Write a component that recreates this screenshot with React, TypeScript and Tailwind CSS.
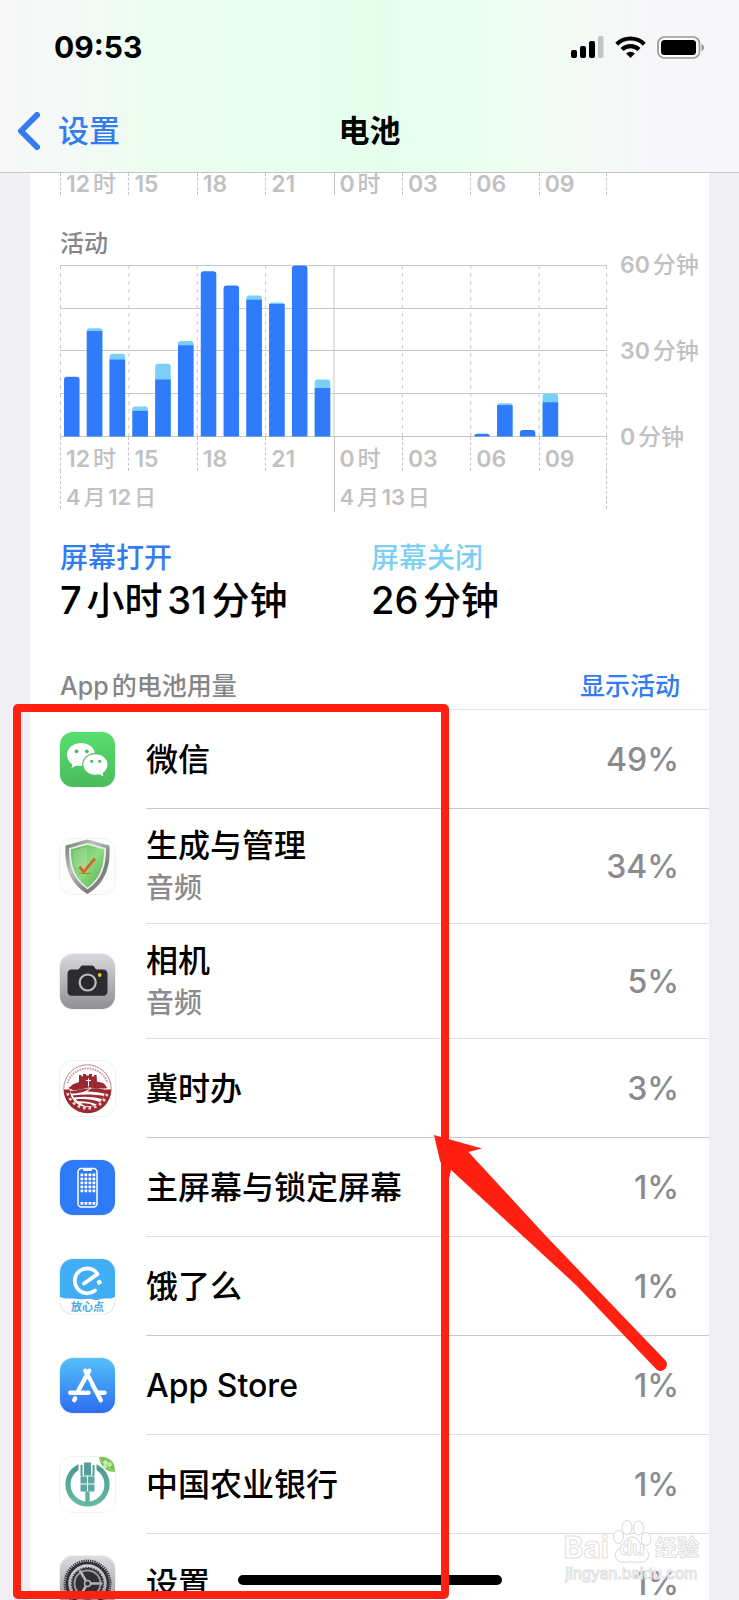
import React from 'react';

interface HourUsage {
    hour: number;
    on: number;
    off: number;
}

interface AppUsage {
    name: string;
    note?: string;
    percent: number;
    icon: React.ReactNode;
    strong?: boolean;
}

// minutes of screen time per hour slot, counted from 12:00
const HOURS: HourUsage[] = [
    { hour: 0, on: 21, off: 0 },
    { hour: 1, on: 37, off: 1 },
    { hour: 2, on: 27, off: 2 },
    { hour: 3, on: 9, off: 1.5 },
    { hour: 4, on: 20, off: 5.5 },
    { hour: 5, on: 32, off: 1.5 },
    { hour: 6, on: 58, off: 0 },
    { hour: 7, on: 53, off: 0 },
    { hour: 8, on: 48, off: 1.5 },
    { hour: 9, on: 46.5, off: 0.5 },
    { hour: 10, on: 60, off: 0 },
    { hour: 11, on: 17, off: 3 },
    { hour: 18, on: 1, off: 0 },
    { hour: 19, on: 11, off: 0.7 },
    { hour: 20, on: 2.3, off: 0 },
    { hour: 21, on: 12, off: 3 },
];

const TICKS = ['12时', '15', '18', '21', '0时', '03', '06', '09'];

const SignalIcon = () => (
    <svg width="33" height="22" viewBox="0 0 33 22">
        <rect x="0" y="14" width="6" height="8" rx="2" />
        <rect x="9" y="10" width="6" height="12" rx="2" />
        <rect x="18" y="5" width="6" height="17" rx="2" />
        <rect x="27" y="0" width="5.5" height="22" rx="2" fill="#c3c7c4" />
    </svg>
);

const WifiIcon = () => (
    <svg width="31" height="22" viewBox="0 0 30 22" fill="none" stroke="#000" strokeWidth="4.2">
        <path d="M1.2 8.2a19.6 19.6 0 0 1 27.600 0" />
        <path d="M6.500 13.600a12.200 12.200 0 0 1 17 0" />
        <path d="M15 22l-4.400-4.400a6.200 6.200 0 0 1 8.800 0z" fill="#000" stroke="none" />
    </svg>
);

const BatteryIcon = () => (
    <svg width="48" height="23" viewBox="0 0 48 23">
        <rect x="1" y="1" width="41.5" height="21" rx="6.5" fill="#fff" fillOpacity="0.5" stroke="#98999b" strokeWidth="1.7" />
        <rect x="4" y="4" width="35" height="15" rx="3.5" />
        <path d="M44.5 8c3.5 1.4 3.5 5.8 0 7.200z" fill="#98999b" />
    </svg>
);

const WeChatIcon = () => (
    <svg className="size-full" viewBox="0 0 55 55">
        <defs>
            <linearGradient id="wechat" x1="0" y1="0" x2="0" y2="1">
                <stop offset="0" stopColor="#58de70" />
                <stop offset="1" stopColor="#4abb5b" />
            </linearGradient>
        </defs>
        <rect width="55" height="55" fill="url(#wechat)" />
        <path d="M21 11c-8 0-14 5.200-14 12 0 3.800 2 7 5.300 9.200L11.500 36l5-2.600c1.500.4 3 .6 4.500.6 8 0 14-5 14-11.500S29 11 21 11z" fill="#fff" />
        <ellipse cx="35.500" cy="32.500" rx="13.300" ry="11.500" fill="#4fc763" />
        <path d="M35.500 22.300c-6.700 0-12.100 4.500-12.100 10.300s5.400 10.200 12.100 10.200c1.400 0 2.700-.2 4-.5l4 2.100-.9-3.500c3-2 4.900-4.900 4.900-8.300 0-5.800-5.300-10.300-12-10.300z" fill="#fff" />
        <circle cx="16.500" cy="19.300" r="1.900" fill="#4cbd5f" />
        <circle cx="26.800" cy="19.300" r="1.900" fill="#4cbd5f" />
        <circle cx="31.700" cy="29.300" r="1.600" fill="#4cbd5f" />
        <circle cx="39.700" cy="29.300" r="1.600" fill="#4cbd5f" />
    </svg>
);

const ShieldIcon = () => (
    <svg className="size-full" viewBox="0 0 55 55">
        <defs>
            <linearGradient id="metal" x1="0" y1="0" x2="1" y2="1">
                <stop offset="0" stopColor="#6f7470" />
                <stop offset="0.350" stopColor="#bfc2c0" />
                <stop offset="0.700" stopColor="#777b79" />
                <stop offset="1" stopColor="#a6aaa7" />
            </linearGradient>
            <linearGradient id="glass" x1="0" y1="0" x2="1" y2="1">
                <stop offset="0" stopColor="#5dba4f" />
                <stop offset="0.500" stopColor="#8fdb83" />
                <stop offset="1" stopColor="#55ac49" />
            </linearGradient>
        </defs>
        <rect width="55" height="55" fill="#fdfdfd" />
        <path d="M27.500 0.500C21 1.500 14 5 5.500 6.500c-1 20 3 37 22 48.500 19-11.500 23-28.500 22-48.500C41 5 34 1.500 27.500.5z" fill="url(#metal)" />
        <path d="M27.500 4C22 5 16 7.500 9 9c-.4 18 4 31.500 18.500 41.500C42 40.500 46.400 27 46 9 39 7.500 33 5 27.500 4z" fill="#e6ebe5" />
        <path d="M27.500 6C22 7 17 9 11 10.300c-.2 17 4 29.200 16.500 38.200C40 39.500 44.200 27.300 44 10.300 38 9 33 7 27.500 6z" fill="url(#glass)" />
        <path d="M13 12c4-1 9-3 14-4v22c-5 0-10-1-13-3-1-5-1-10-1-15z" fill="#fff" fillOpacity="0.180" />
        <path d="M19.500 27.500l4 5.500L35 19.500" fill="none" stroke="#d9652c" strokeWidth="2.800" />
        <path d="M19 35c3-2 6 1 12-1" fill="none" stroke="#a77b42" strokeWidth="1" />
    </svg>
);

const CameraIcon = () => (
    <svg className="size-full" viewBox="0 0 55 55">
        <defs>
            <linearGradient id="camera" x1="0" y1="0" x2="0" y2="1">
                <stop offset="0" stopColor="#d9d9dd" />
                <stop offset="1" stopColor="#8f8f94" />
            </linearGradient>
        </defs>
        <rect width="55" height="55" fill="url(#camera)" />
        <path d="M11.500 15.500H18c1.500 0 2.200-4 4.700-4H32c2.500 0 3.200 4 4.700 4h6.800c2.300 0 4 1.700 4 4v18.300c0 2.300-1.700 4-4 4h-32c-2.300 0-4-1.700-4-4V19.500c0-2.300 1.700-4 4-4z" fill="#2b2b30" />
        <circle cx="27.700" cy="28.500" r="8" fill="#27272c" stroke="#bdbdc2" strokeWidth="2.200" />
        <circle cx="39.700" cy="21" r="1.900" fill="#e8c530" />
    </svg>
);

const JishibanIcon = () => (
    <svg className="size-full" viewBox="0 0 55 55">
        <rect width="55" height="55" fill="#fff" />
        <circle cx="27.500" cy="27.500" r="23.700" fill="#fff" stroke="#b9777c" strokeWidth="0.900" />
        <path d="M7.500 22a21 21 0 0 1 40 0" fill="none" stroke="#cf9a9d" strokeWidth="2" strokeDasharray="1.600 1" />
        <path d="M3.800 28.500a23.700 23.700 0 0 0 47.400 0h-6a17.700 17.700 0 0 1-35.400 0z" fill="#9b2931" />
        <path d="M7.500 32a20.700 20.700 0 0 0 40 0" fill="none" stroke="#eed6d7" strokeWidth="2.600" strokeDasharray="2.600 3" />
        <path d="M8 27c3-1 4-4 7-4.500l4-1.500v-7h2.500v1.500H23V13h3v1.500h3V13h3v2.500h2V14h2.500l.5 6.500 6 1.500c2 1 3 3 4 5-3 1.500-6-.5-9 .5l-9-1-9 2-6 1z" fill="#9b2931" />
        <path d="M28.500 17.500v8M26 19.500h5" stroke="#fff" strokeWidth="1" />
        <path d="M10 29.500c7 1 12-2.500 20-2-4 3-11 5-19 5z" fill="#9b2931" />
        <path d="M31 27.500c5-.5 10 0 14.500 1.500l-.5 3.500c-5-.5-11-2-18-2z" fill="#9b2931" />
        <path d="M12.500 34.500c10-1.500 21-1.500 31.500.5L42 38c-9-2.500-18-3-28-1.500z" fill="#9b2931" />
        <path d="M15.500 38.500c9-1 17 0 24.500 2.500L37 43.500c-6-2.500-12-3.500-19-3.300z" fill="#9b2931" />
        <path d="M21 42.500c5-.5 9 .5 12.500 2-4 1.500-9 1-12.500-2z" fill="#9b2931" />
    </svg>
);

const HomeScreenIcon = () => (
    <svg className="size-full" viewBox="0 0 55 55">
        <rect width="55" height="55" fill="#2f7af8" />
        <rect x="18" y="8.500" width="19" height="38.500" rx="3.500" fill="none" stroke="#fff" strokeWidth="1.500" />
        <path d="M23 8.500h9v1.300c0 .8-.7 1.200-1.500 1.200h-6c-.8 0-1.500-.4-1.500-1.200z" fill="#fff" />
        {[14, 18, 22, 26, 30, 42.5].map((y) =>
            [21, 25, 29, 33].map((x) => <rect key={`${x}-${y}`} x={x - 0.5} y={y - 0.6} width="2.800" height="2.800" rx="0.500" fill="#fff" />)
        )}
    </svg>
);

const ElemeIcon = () => (
    <svg className="size-full" viewBox="0 0 55 55">
        <rect width="55" height="55" fill="#41adf5" />
        <path d="M0 38c6 2.500 12 1 18 2 5 1 9-1 14 0 4 2.500 7 0 11-.500 4-.500 7 1 12-1.500v17H0z" fill="#fff" />
        <path d="M35 31.500a12.400 12.400 0 1 1 2.500-16.400L24 24.500" fill="none" stroke="#fff" strokeWidth="3.800" strokeLinejoin="round" strokeLinecap="round" />
        <rect x="37" y="21" width="4.500" height="4.500" rx="1" fill="#fff" transform="rotate(-30 39.200 23.200)" />
        <text x="27.500" y="52" textAnchor="middle" fontSize="11" fontWeight="700" fill="#4ba9dc">放心点</text>
    </svg>
);

const AppStoreIcon = () => (
    <svg className="size-full" viewBox="0 0 55 55">
        <defs>
            <linearGradient id="store" x1="0" y1="0" x2="0" y2="1">
                <stop offset="0" stopColor="#54c0f9" />
                <stop offset="1" stopColor="#2e6df1" />
            </linearGradient>
        </defs>
        <rect width="55" height="55" fill="url(#store)" />
        <g fill="none" stroke="#fff" strokeWidth="4.400" strokeLinecap="round">
            <path d="M29.300 12.700L18.600 32" />
            <path d="M25.300 12.700l15.500 29.600" />
            <path d="M10.300 34.800h18.200" />
            <path d="M38 34.800h6.500" />
            <path d="M15.200 40.300l-1 1.800" />
        </g>
        <path d="M27.300 21.500l2.600 4.900-4.200 7" fill="none" stroke="#3f98f5" strokeWidth="1" />
    </svg>
);

const AgriBankIcon = () => (
    <svg className="size-full" viewBox="0 0 55 55">
        <defs>
            <linearGradient id="bank" x1="0" y1="0" x2="0" y2="1">
                <stop offset="0" stopColor="#4e9692" />
                <stop offset="1" stopColor="#66b9a3" />
            </linearGradient>
        </defs>
        <rect width="55" height="55" fill="#fff" />
        <circle cx="27.500" cy="27.500" r="19.500" fill="none" stroke="url(#bank)" strokeWidth="5.200" />
        <path d="M18.500 4h18v15h-18z" fill="#fff" />
        <path d="M20.500 8v11.500h14V8h-2v10.500h-10V8z" fill="#559f98" />
        <path d="M24 5.500h7v12.500h-7z" fill="#559f98" />
        <path d="M20.500 20h14v14.500h-14z" fill="#5ba89c" />
        <path d="M27.500 19v15M20 27h15" stroke="#fff" strokeWidth="1.100" />
        <path d="M25.300 34.500h4.400v13h-4.400z" fill="#62b2a1" />
        <path d="M39 0h10c5 2 6 8 6 15-9 0-15-6-16-15z" fill="#78c452" />
        <path d="M39 0c4 7 9 11 16 15" stroke="#a4db7f" strokeWidth="1" fill="none" />
        <circle cx="45.500" cy="5.500" r="2.200" fill="#c8ecb2" />
        <circle cx="49.500" cy="7.500" r="2.200" fill="#c8ecb2" />
        <circle cx="45" cy="9.500" r="2" fill="#c8ecb2" />
    </svg>
);

const GearIcon = () => (
    <svg className="size-full" viewBox="0 0 55 55">
        <defs>
            <linearGradient id="gear" x1="0" y1="0" x2="0" y2="1">
                <stop offset="0" stopColor="#dcdce0" />
                <stop offset="1" stopColor="#8f8f94" />
            </linearGradient>
        </defs>
        <rect width="55" height="55" fill="url(#gear)" />
        <circle cx="27.500" cy="27.500" r="22.500" fill="none" stroke="#3a3a3c" strokeWidth="3" strokeDasharray="1.300 0.900" />
        <circle cx="27.500" cy="27.500" r="20.500" fill="none" stroke="#303032" strokeWidth="2.500" />
        <circle cx="27.500" cy="27.500" r="15.500" fill="#303032" stroke="#303032" strokeWidth="2" strokeDasharray="1.600 1.100" />
        <circle cx="27.500" cy="27.500" r="13" fill="none" stroke="#98989c" strokeWidth="2" />
        <path d="M27.500 27.500h15M27.500 27.500L19.500 14M27.500 27.500L19.500 41" stroke="#b4b4b8" strokeWidth="2.500" />
        <circle cx="27.500" cy="27.500" r="3" fill="#303032" stroke="#b4b4b8" strokeWidth="1.500" />
    </svg>
);

const APPS: AppUsage[] = [
    { name: '微信', percent: 49, icon: <WeChatIcon />, strong: true },
    { name: '生成与管理', note: '音频', percent: 34, icon: <ShieldIcon /> },
    { name: '相机', note: '音频', percent: 5, icon: <CameraIcon /> },
    { name: '冀时办', percent: 3, icon: <JishibanIcon />, strong: true },
    { name: '主屏幕与锁定屏幕', percent: 1, icon: <HomeScreenIcon /> },
    { name: '饿了么', percent: 1, icon: <ElemeIcon />, strong: true },
    { name: 'App Store', percent: 1, icon: <AppStoreIcon /> },
    { name: '中国农业银行', percent: 1, icon: <AgriBankIcon /> },
    { name: '设置', percent: 1, icon: <GearIcon /> },
];

// digits carry more weight than the units beside them
const Measure: React.FC<{ text: string }> = ({ text }) => (
    <>
        {text.split(/(\d+)/).map((part, i) => (i % 2 ? <span key={i} className="font-semibold">{part}</span> : part))}
    </>
);

const TickRow: React.FC<{ tall?: boolean }> = ({ tall }) => (
    <div className={`grid grid-cols-8 grid-rows-1 text-[23px] text-[#c1c1c3] ${tall ? 'h-[34px] leading-[44px]' : 'h-[22px] leading-[22px]'}`}>
        {TICKS.map((tick, i) => (
            <div
                key={tick}
                className={`whitespace-nowrap pl-[5px] border-[#c6c6c8] ${i === 4 ? 'border-l' : 'border-l border-dashed'} ${i === 7 ? 'border-r' : ''}`}
            >
                <Measure text={tick} />
            </div>
        ))}
    </div>
);

const ActivityPlot = () => (
    <svg className="block w-full h-[172px]" viewBox="0 0 546 172" preserveAspectRatio="none">
        {[0.5, 43.5, 85.5, 128.5, 171.5].map((y) => (
            <line key={y} x1="0" x2="546" y1={y} y2={y} stroke="#c8c8ca" />
        ))}
        {TICKS.map((tick, i) => (
            <line key={tick} x1={i * 68.25 + 0.5} x2={i * 68.25 + 0.5} y1="0" y2="172" stroke="#c8c8ca" strokeDasharray={i === 4 ? undefined : '4 4'} />
        ))}
        <line x1="545.500" x2="545.500" y1="0" y2="172" stroke="#c8c8ca" strokeDasharray="4 4" />
        {HOURS.map(({ hour, on, off }) => {
            const x = hour * 22.75 + 4;
            const total = (on + off) * 2.85;
            const r = Math.min(3, total);
            const top = 171.5 - total;
            return (
                <g key={hour}>
                    <path d={`M${x} 171.500V${top + r}q0 ${-r} ${r} ${-r}h${15.5 - 2 * r}q${r} 0 ${r} ${r}V171.500z`} fill={off > 0 ? '#79cff7' : '#2f7bfb'} />
                    {off > 0 && <rect x={x} y={171.5 - on * 2.85} width="15.500" height={on * 2.85} fill="#2f7bfb" />}
                </g>
            );
        })}
    </svg>
);

const UsageRow: React.FC<{ app: AppUsage }> = ({ app }) => (
    <li className={`flex shrink-0 items-center pl-[30px] ${app.note ? 'h-[115px]' : 'h-[99px]'}`}>
        <div className="size-[55px] shrink-0 overflow-hidden rounded-[13px] ring-1 ring-black/5">{app.icon}</div>
        <div className={`ml-[31px] flex h-full flex-1 items-center justify-between border-b pt-[2px] pr-[30px] ${app.strong ? 'border-[#c9c9cb]' : 'border-[#dedee0]'}`}>
            <div>
                <div className="text-[32px] leading-[42px] text-black">{app.name}</div>
                {app.note && <div className="text-[28px] leading-[42px] text-[#8b8b8e]">{app.note}</div>}
            </div>
            <div className="text-[32px] leading-[42px] text-[#8b8b8e]">{app.percent}%</div>
        </div>
    </li>
);

const Watermark = () => (
    <div className="absolute right-[10px] bottom-4 flex flex-col items-center text-white [-webkit-text-stroke:1px_#dfdfdf]">
        <div className="flex items-end gap-1 text-[30px] leading-[34px] font-bold">
            <span>Bai</span>
            <span className="relative flex h-[44px] w-[38px] items-end justify-center">
                <svg className="absolute inset-0 size-full" viewBox="0 0 38 44" fill="#fff" stroke="#d6d6d6">
                    <ellipse cx="5.500" cy="17" rx="5" ry="6.500" />
                    <ellipse cx="14" cy="7.500" rx="5" ry="7" />
                    <ellipse cx="25.500" cy="8" rx="5" ry="7" />
                    <ellipse cx="33" cy="19" rx="4.800" ry="6.500" />
                    <path d="M19 17c-6 0-7 6-11 9.500S1 33 3 38c3 6 10 4 16 4s13 2 16-4c2-5-1-8-5-11.500S25 17 19 17z" />
                </svg>
                <span className="relative text-[20px] leading-8">du</span>
            </span>
            <span className="text-[22px]">经验</span>
        </div>
        <div className="text-[15px] leading-5 font-medium">jingyan.baidu.com</div>
    </div>
);

export default function App() {
    return (
        <div className="relative flex h-screen flex-col overflow-hidden bg-[#efeff4] font-['Inter','Noto_Sans_CJK_SC',sans-serif] font-medium [text-autospace:normal]">
            <header className="shrink-0 border-b border-[#c4c8c6] bg-[linear-gradient(to_right,#f7f7f8_0%,#f4f9f6_9%,#edfdf1_20%,#e8ffee_36%,#e6ffed_52%,#ebfff0_66%,#f3faf5_77%,#f7f7f9_88%)]">
                <div className="flex h-[94px] items-center justify-between pr-[34px] pl-[54px]">
                    <span className="text-[30px] leading-8 font-bold">09:53</span>
                    <div className="flex items-center gap-[11px]">
                        <SignalIcon />
                        <WifiIcon />
                        <BatteryIcon />
                    </div>
                </div>
                <nav className="grid h-[78px] grid-cols-3 items-center px-[18px] pb-1">
                    <button type="button" className="flex items-center gap-[18px] text-[31px] leading-[44px] text-[#327cf0]">
                        <svg width="22" height="38" viewBox="0 0 22 38" fill="none" stroke="currentColor" strokeWidth="6" strokeLinecap="round" strokeLinejoin="round">
                            <path d="M19 3L3 19l16 16" />
                        </svg>
                        设置
                    </button>
                    <h1 className="text-center text-[31px] leading-[44px] font-semibold">电池</h1>
                </nav>
            </header>

            <main className="mx-[30px] flex min-h-0 flex-1 flex-col bg-white">
                <section className="shrink-0 pl-[30px]">
                    <div className="mr-[102px]">
                        <TickRow />
                    </div>
                    <h2 className="mt-[37px] text-[24px] leading-6 text-[#868689]">活动</h2>
                    <div className="mt-[9px] flex">
                        <div className="min-w-0 flex-1">
                            <ActivityPlot />
                            <TickRow tall />
                            <div className="grid h-[38px] grid-cols-2 grid-rows-1 text-[22px] leading-[52px] text-[#c1c1c3]">
                                <div className="border-l border-dashed border-[#c6c6c8] pl-[5px]">
                                    <Measure text="4月12日" />
                                </div>
                                <div className="relative border-r border-dashed border-[#c6c6c8] pl-[6px] before:absolute before:top-0 before:left-0 before:h-[41px] before:w-px before:bg-[#c6c6c8]">
                                    <Measure text="4月13日" />
                                </div>
                            </div>
                        </div>
                        <div className="-mt-3 flex h-[196px] w-[102px] flex-col justify-between pl-[13px] text-[23px] leading-6 whitespace-nowrap text-[#c1c1c3]">
                            <span><Measure text="60分钟" /></span>
                            <span><Measure text="30分钟" /></span>
                            <span><Measure text="0分钟" /></span>
                        </div>
                    </div>
                    <dl className="mt-[33px] grid grid-cols-[311px_1fr]">
                        <div>
                            <dt className="text-[28px] leading-8 text-[#327cf0]">屏幕打开</dt>
                            <dd className="text-[38px] leading-[52px] text-black">7小时31分钟</dd>
                        </div>
                        <div>
                            <dt className="text-[28px] leading-8 text-[#7fcff3]">屏幕关闭</dt>
                            <dd className="text-[38px] leading-[52px] text-black">26分钟</dd>
                        </div>
                    </dl>
                </section>

                <div className="mt-[46px] flex h-[38px] shrink-0 items-start justify-between border-b border-[#e6e6e8] pr-[29px] pl-[30px] text-[25px] leading-7">
                    <h2 className="text-[#868689]">App的电池用量</h2>
                    <button type="button" className="text-[#327cf0]">显示活动</button>
                </div>

                <section className="relative min-h-0 flex-1">
                    <ul className="flex h-full flex-col overflow-hidden">
                        {APPS.map((app) => (
                            <UsageRow key={app.name} app={app} />
                        ))}
                    </ul>
                    <Watermark />
                    <div className="absolute bottom-[15px] left-[208px] h-[10px] w-[264px] rounded-full bg-black" />
                    <div className="absolute -top-[6px] bottom-px -left-[17px] w-[436px] rounded-[5px] border-8 border-[#ff2011]" />
                    <svg className="absolute top-[424px] left-[402px]" width="238" height="238" viewBox="432 1133 238 238" fill="#ff2011">
                        <path d="M434 1134L482 1147.500L468.500 1151L545 1234L665.500 1359.500A6.400 6.400 0 0 1 656.500 1368.500L576 1284L525 1237L451 1169L448.500 1180L440 1160z" />
                    </svg>
                </section>
            </main>
        </div>
    );
}
